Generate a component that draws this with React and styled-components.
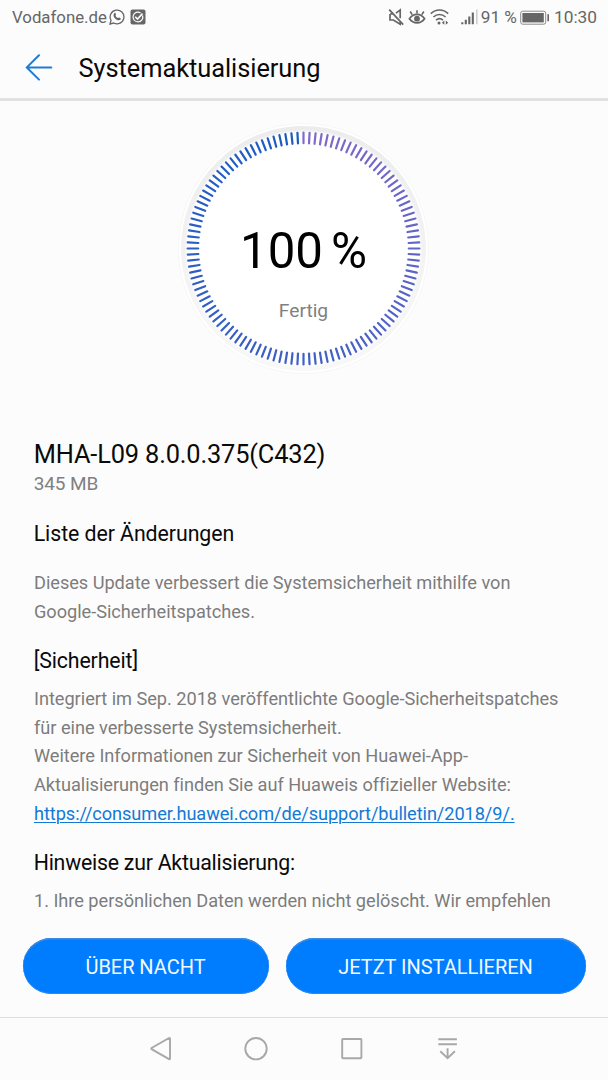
import styled, { createGlobalStyle } from "styled-components";

const TICKS = 120;

function mix(from, to, t) {
  return `rgb(${from.map((c, i) => Math.round(c + (to[i] - c) * t)).join(",")})`;
}

function tickColor(i) {
  const t = i / TICKS;
  return t < 0.5
    ? mix([130, 106, 202], [62, 96, 196], t * 2)
    : mix([62, 96, 196], [26, 92, 194], (t - 0.5) * 2);
}

function Dial() {
  return (
    <DialArea>
      <DialDrawing viewBox="-127.5 -127.5 255 255">
        <defs>
          <linearGradient id="ring" x1="0" y1="0" x2="0" y2="1">
            <stop offset="0" stopColor="#ececec" />
            <stop offset="0.55" stopColor="#f3f3f3" />
            <stop offset="1" stopColor="#f8f8f8" />
          </linearGradient>
          <radialGradient id="face">
            <stop offset="0.97" stopColor="#ffffff" />
            <stop offset="1" stopColor="#ffffff" stopOpacity="0" />
          </radialGradient>
        </defs>
        <circle r="125" fill="#ffffff" stroke="#f7f7f7" strokeWidth="1" />
        <circle r="122.5" fill="url(#ring)" />
        <circle r="119" fill="url(#face)" />
        {Array.from({ length: TICKS }, (_, i) => (
          <line
            key={i}
            y1="-115.9"
            y2="-105.3"
            stroke={tickColor(i)}
            strokeWidth="2.2"
            strokeLinecap="round"
            transform={`rotate(${(i * 360) / TICKS})`}
          />
        ))}
      </DialDrawing>
      <DialText>
        <Percent>
          <span>100</span>
          <span>%</span>
        </Percent>
        <State>Fertig</State>
      </DialText>
    </DialArea>
  );
}

function StatusBar() {
  return (
    <Status>
      <StatusText $size={16.8}>Vodafone.de</StatusText>
      <Icon $w={16} $h={16} $left={2.5} viewBox="0 0 16 16">
        <path d="M1 15l1-3.700A6.900 6.900 0 1 1 4.700 14z" strokeWidth="1.300" />
        <path
          d="M5.300 4.200c.5-.5 1-.4 1.200.1l.5 1.200c.1.400-.6 1-.5 1.200.5 1.100 1.400 1.900 2.500 2.400.3.100.8-.8 1.200-.6l1.300.7c.5.300.2 1.200-.3 1.600-1 .8-2.400.5-3.900-.4C5.700 9.400 4.600 8 4.500 6.200c0-.8.3-1.500.8-2z"
          fill="#666"
          stroke="none"
        />
      </Icon>
      <Icon $w={16} $h={16} $left={5} viewBox="0 0 16 16">
        <rect x="0.500" y="0.500" width="15" height="15" rx="2" fill="#666" stroke="none" />
        <path d="M12.600 6.500A4.900 4.900 0 1 1 10.600 3.900" stroke="#fcfcfc" strokeWidth="1.200" />
        <path d="M5.200 7.700l2.300 2.300 5-5.400" stroke="#fcfcfc" strokeWidth="1.600" />
      </Icon>
      <Spacer />
      <Icon $w={17} $h={18} viewBox="0 0 17 18">
        <path d="M1.200 1.700l14 15M8 5.200l4.200-3.300v8.400M2 6v6h3.400l6.800 4.300v-2.800M2 6h3.200" strokeWidth="1.700" />
      </Icon>
      <Icon $w={18} $h={18} $left={3} viewBox="0 0 18 18">
        <path d="M1.400 10.800C5.200 5 12.800 5 16.600 10.800 12.800 16.200 5.200 16.200 1.400 10.800z" strokeWidth="1.700" />
        <path d="M9 5.500V2.200M4.200 6.600L2.200 3.500M13.800 6.600l2-3.100" strokeWidth="1.600" />
        <circle cx="9" cy="10.700" r="2.900" fill="#666" stroke="none" />
      </Icon>
      <Icon $w={19} $h={18} $left={4} viewBox="0 0 19 18">
        <path d="M.8 5.600c5-4.800 12.400-4.800 17.400 0M3.400 9c3.600-3.300 8.600-3.300 12.200 0M6 12.200c2.200-1.900 4.800-1.900 7 0" strokeWidth="1.600" />
        <circle cx="9" cy="14.900" r="1.500" fill="#666" stroke="none" />
        <path d="M14.300 12.600v4.200l-2.400-2.100zM15.800 12.600v4.200l2.400-2.100z" fill="#666" stroke="none" />
      </Icon>
      <Icon $w={18} $h={18} $left={12} viewBox="0 0 18 18">
        <path d="M1.300 16.300v-2M4.800 16.300v-4.500M8.300 16.300V8.500M11.800 16.300V4.500" strokeWidth="2.100" />
        <path d="M15.800 16.300V1.500" stroke="#cfcfcf" strokeWidth="1.600" />
      </Icon>
      <StatusText $size={17.2} $left={2}>
        91 %
      </StatusText>
      <Icon $w={30} $h={15} $left={3.5} viewBox="0 0 30 15">
        <rect x="0.700" y="1.200" width="25" height="13" rx="2" strokeWidth="1" stroke="#8a8a8a" />
        <rect x="2.400" y="3" width="21.400" height="9.400" fill="#666" stroke="none" />
        <path d="M28.200 4.300v7" strokeWidth="1.600" />
      </Icon>
      <StatusText $size={17.3} $left={3.5}>
        10:30
      </StatusText>
    </Status>
  );
}

export default function App() {
  return (
    <>
      <GlobalStyle />
      <Screen>
        <StatusBar />
        <Header>
          <BackArrow viewBox="0 0 28 28">
            <path d="M26.300 14.400H1.800M14 2.200L1.800 14.400 14 26.600" />
          </BackArrow>
          <h1>Systemaktualisierung</h1>
        </Header>
        <Content>
          <Dial />
          <Version>MHA-L09 8.0.0.375(C432)</Version>
          <Size>345 MB</Size>
          <Heading $top={22.7} $spacing={-0.06}>
            Liste der Änderungen
          </Heading>
          <Text $top={21.4}>
            Dieses Update verbessert die Systemsicherheit mithilfe von
            <br />
            Google-Sicherheitspatches.
          </Text>
          <Heading $top={20} $spacing={-0.12}>
            [Sicherheit]
          </Heading>
          <Text $top={10.2}>
            Integriert im Sep. 2018 veröffentlichte Google-Sicherheitspatches
            <br />
            für eine verbesserte Systemsicherheit.
            <br />
            Weitere Informationen zur Sicherheit von Huawei-App-
            <br />
            Aktualisierungen finden Sie auf Huaweis offizieller Website:
            <br />
            <Link>https://consumer.huawei.com/de/support/bulletin/2018/9/.</Link>
          </Text>
          <Heading $top={20} $spacing={-0.23}>
            Hinweise zur Aktualisierung:
          </Heading>
          <Text $top={10.4}>
            1. Ihre persönlichen Daten werden nicht gelöscht. Wir empfehlen
          </Text>
        </Content>
        <Actions>
          <Button>ÜBER NACHT</Button>
          <Button>JETZT INSTALLIEREN</Button>
        </Actions>
        <NavBar>
          <NavIcon viewBox="0 0 26 26">
            <path d="M22 2.600v20a.6.600 0 0 1-1 .5L3.600 13.200a.8.800 0 0 1 0-1.200L21 2.100a.6.600 0 0 1 1 .5z" />
          </NavIcon>
          <NavIcon viewBox="0 0 26 26">
            <circle cx="13" cy="12.700" r="10.700" />
          </NavIcon>
          <NavIcon viewBox="0 0 26 26">
            <rect x="3.200" y="3" width="19.200" height="19.200" rx="0.800" />
          </NavIcon>
          <NavIcon viewBox="0 0 26 26">
            <path d="M3.300 3.200h18.600M3.300 8.200h18.600M12.600 12.300v10M5.300 15.200l7.300 7 7.300-7" />
          </NavIcon>
        </NavBar>
      </Screen>
    </>
  );
}

const GlobalStyle = createGlobalStyle`
  * {
    box-sizing: border-box;
  }

  body,
  h1,
  h2,
  h3,
  p {
    margin: 0;
    font-weight: 400;
  }

  body {
    background-color: #fcfcfc;
    font-family: Roboto, sans-serif;
  }
`;

const Screen = styled.div`
  width: 608px;
  height: 1080px;
  display: flex;
  flex-direction: column;
  overflow: hidden;
  background-color: #fcfcfc;
`;

const Status = styled.div`
  height: 34px;
  padding: 0 11px 0 12px;
  display: flex;
  align-items: center;
  flex-shrink: 0;
`;

const StatusText = styled.span`
  margin-left: ${(props) => props.$left || 0}px;
  font-size: ${(props) => props.$size}px;
  line-height: 34px;
  white-space: nowrap;
  color: #666666;
`;

const Icon = styled.svg`
  width: ${(props) => props.$w}px;
  height: ${(props) => props.$h}px;
  margin-left: ${(props) => props.$left || 0}px;
  flex-shrink: 0;
  fill: none;
  stroke: #666666;
`;

const Spacer = styled.div`
  flex: 1;
`;

const Header = styled.header`
  height: 67px;
  padding-left: 25px;
  display: flex;
  align-items: center;
  flex-shrink: 0;
  border-bottom: 3px solid #e1e1e1;

  h1 {
    margin: 4px 0 0 25.5px;
    font-size: 25.4px;
    letter-spacing: -0.05px;
    line-height: 32px;
    color: #0a0a0a;
  }
`;

const BackArrow = styled.svg`
  width: 28px;
  height: 28px;
  margin-top: 2px;
  fill: none;
  stroke: #1f7bd6;
  stroke-width: 2;
  stroke-linecap: round;
`;

const Content = styled.main`
  height: 822px;
  padding: 20px 34px 0;
  flex-shrink: 0;
  overflow: hidden;
`;

const DialArea = styled.div`
  width: 255px;
  height: 255px;
  margin: 0 0 62px 142px;
  display: grid;

  > * {
    grid-area: 1 / 1;
  }
`;

const DialDrawing = styled.svg`
  width: 255px;
  height: 255px;
`;

const DialText = styled.div`
  z-index: 1;
  padding-top: 100px;
  display: flex;
  flex-direction: column;
  align-items: center;
`;

const Percent = styled.div`
  display: flex;
  gap: 8px;
  font-size: 49.2px;
  line-height: 60px;
  color: #000000;
`;

const State = styled.p`
  margin-top: 16px;
  font-size: 19.2px;
  line-height: 28px;
  color: #808080;
`;

const Version = styled.h2`
  margin-left: -0.3px;
  font-size: 25.4px;
  letter-spacing: -0.16px;
  line-height: 32px;
  color: #0a0a0a;
`;

const Size = styled.p`
  margin-left: -0.3px;
  font-size: 19px;
  letter-spacing: -0.1px;
  line-height: 27px;
  color: #808080;
`;

const Heading = styled.h3`
  margin: ${(props) => props.$top}px 0 0 -0.3px;
  font-size: 21.3px;
  letter-spacing: ${(props) => props.$spacing}px;
  line-height: 28px;
  color: #0a0a0a;
`;

const Text = styled.p`
  margin: ${(props) => props.$top}px 0 0;
  font-size: 18.2px;
  letter-spacing: -0.035px;
  line-height: 28.8px;
  white-space: nowrap;
  color: #7c7c7c;
`;

const Link = styled.a`
  letter-spacing: -0.075px;
  color: #1279d6;
  text-decoration: underline;
  text-decoration-thickness: 1px;
  text-underline-offset: 2px;
`;

const Actions = styled.div`
  height: 94px;
  padding: 15px 22.5px 0;
  display: grid;
  grid-template-columns: 246px 300px;
  gap: 17px;
  align-items: start;
  flex-shrink: 0;
`;

const Button = styled.button`
  height: 56px;
  padding: 2px 0 0;
  border: 0;
  border-radius: 28px;
  font-family: inherit;
  font-size: 20px;
  letter-spacing: -0.03px;
  line-height: 28px;
  color: #f2faff;
  background-color: #007dff;
  box-shadow: inset 0 1.5px 0 #3c8be0, inset 0 -1px 0 #2e8af0;
`;

const NavBar = styled.nav`
  height: 63px;
  padding-left: 147.5px;
  display: flex;
  gap: 69.7px;
  align-items: center;
  flex-shrink: 0;
  border-top: 1px solid #dddddd;
`;

const NavIcon = styled.svg`
  width: 26px;
  height: 26px;
  fill: none;
  stroke: #a8a8a8;
  stroke-width: 1.9;
`;
